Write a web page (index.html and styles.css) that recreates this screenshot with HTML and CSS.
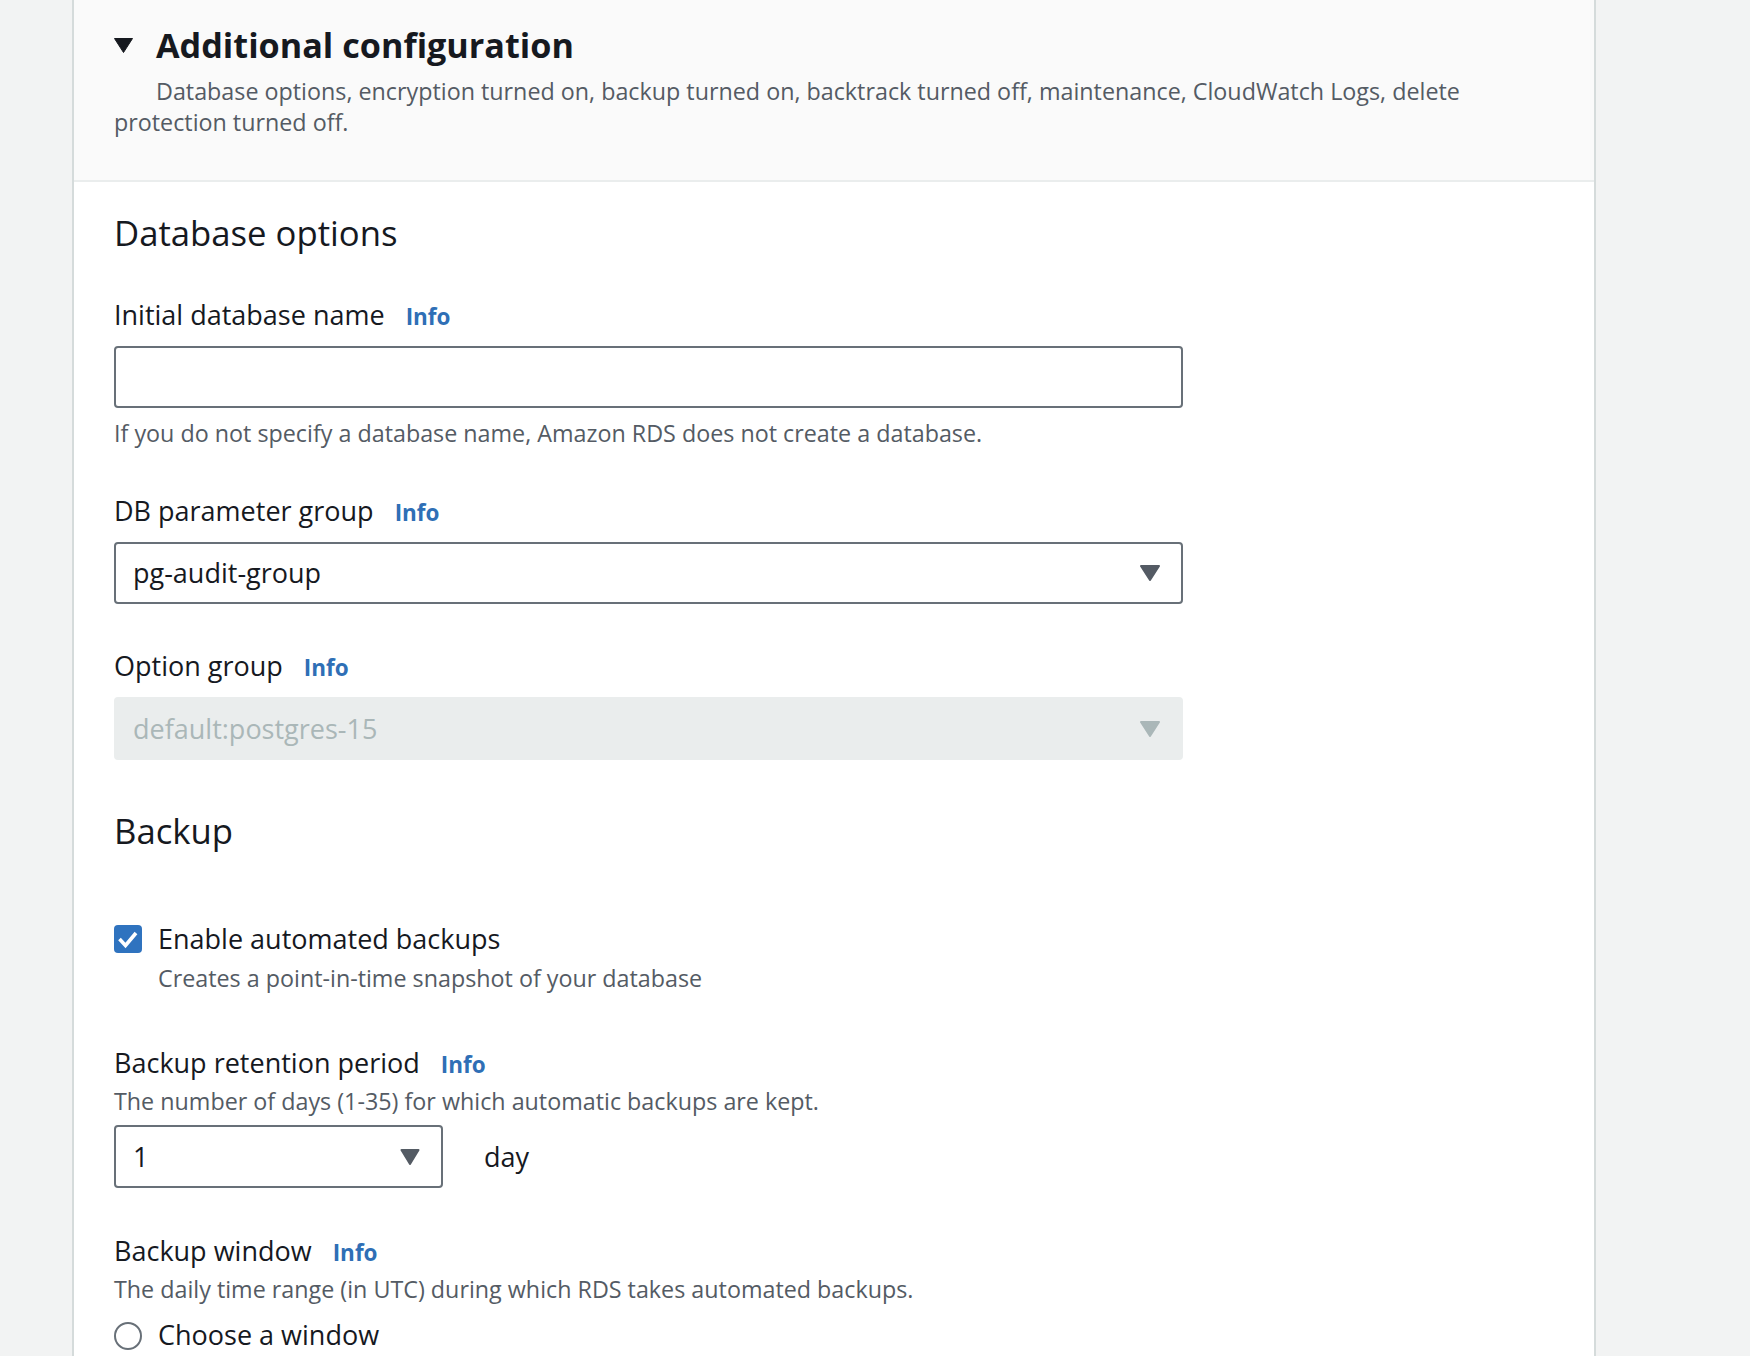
FILE: index.html
```html
<!DOCTYPE html>
<html lang="en">
<head>
<meta charset="utf-8">
<title>Additional configuration</title>
<link rel="stylesheet" href="styles.css">
</head>
<body>
<div class="page">
  <div class="panel">
    <div class="panel-header">
      <div class="header-title-row">
        <svg class="expand-icon" width="19" height="15" viewBox="0 0 19 15" aria-hidden="true"><polygon points="0.5,0.5 18.5,0.5 9.5,14.5" fill="#16191f" stroke="#16191f" stroke-width="1" stroke-linejoin="round"/></svg>
        <h1 class="header-title">Additional configuration</h1>
      </div>
      <p class="header-desc">Database options, encryption turned on, backup turned on, backtrack turned off, maintenance, CloudWatch Logs, delete protection turned off.</p>
    </div>

    <div class="panel-body">
      <h2 class="section-title">Database options</h2>

      <div class="field">
        <div class="field-label"><span>Initial database name</span><a class="info-link">Info</a></div>
        <div class="control text-input"></div>
        <div class="field-help">If you do not specify a database name, Amazon RDS does not create a database.</div>
      </div>

      <div class="field">
        <div class="field-label"><span>DB parameter group</span><a class="info-link">Info</a></div>
        <div class="control select">
          <span class="select-value">pg-audit-group</span>
          <svg class="select-arrow" width="20" height="16" viewBox="0 0 20 16" aria-hidden="true"><polygon points="1,1 19,1 10,15" fill="#545b64" stroke="#545b64" stroke-width="2" stroke-linejoin="round"/></svg>
        </div>
      </div>

      <div class="field">
        <div class="field-label"><span>Option group</span><a class="info-link">Info</a></div>
        <div class="control select select-disabled">
          <span class="select-value">default:postgres-15</span>
          <svg class="select-arrow" width="20" height="16" viewBox="0 0 20 16" aria-hidden="true"><polygon points="1,1 19,1 10,15" fill="#aab7b8" stroke="#aab7b8" stroke-width="2" stroke-linejoin="round"/></svg>
        </div>
      </div>

      <h2 class="section-title section-title-next">Backup</h2>

      <div class="checkbox-field">
        <div class="check-row">
          <span class="checkbox">
            <svg width="28" height="28" viewBox="0 0 28 28" aria-hidden="true"><polyline points="5.5,14 11.5,20.5 22,8" fill="none" stroke="#ffffff" stroke-width="3.6" stroke-linejoin="miter"/></svg>
          </span>
          <span class="check-label">Enable automated backups</span>
        </div>
        <div class="check-desc">Creates a point-in-time snapshot of your database</div>
      </div>

      <div class="field field-retention">
        <div class="field-label"><span>Backup retention period</span><a class="info-link">Info</a></div>
        <div class="field-desc">The number of days (1-35) for which automatic backups are kept.</div>
        <div class="control retention-row">
          <div class="select select-small">
            <span class="select-value">1</span>
            <svg class="select-arrow" width="20" height="16" viewBox="0 0 20 16" aria-hidden="true"><polygon points="1.5,1 18.5,1 10,15" fill="#545b64" stroke="#545b64" stroke-width="2" stroke-linejoin="round"/></svg>
          </div>
          <span class="unit">day</span>
        </div>
      </div>

      <div class="field field-window">
        <div class="field-label"><span>Backup window</span><a class="info-link">Info</a></div>
        <div class="field-desc field-desc-tight">The daily time range (in UTC) during which RDS takes automated backups.</div>
        <div class="radio-row">
          <span class="radio"></span>
          <span class="check-label">Choose a window</span>
        </div>
      </div>
    </div>
  </div>
</div>
</body>
</html>
```

FILE: styles.css
```css
html, body {
  margin: 0;
  padding: 0;
}

body {
  background: #f2f3f3;
  font-family: "Open Sans", "Noto Sans", sans-serif;
  color: #16191f;
}

.page {
  height: 1356px;
  overflow: hidden;
}

.panel {
  margin-left: 72px;
  width: 1524px;
  box-sizing: border-box;
  min-height: 1356px;
  background: #ffffff;
  border-left: 2px solid #d5dbdb;
  border-right: 2px solid #d5dbdb;
}

.panel-header {
  background: #fafafa;
  padding: 23px 40px 42px 40px;
  border-bottom: 2px solid #eaeded;
}

.header-title-row {
  display: flex;
  align-items: center;
  gap: 23px;
}

.expand-icon {
  display: block;
  flex: none;
  margin-top: 2px;
}

.header-title {
  margin: 0;
  font-size: 34.2px;
  line-height: 43px;
  font-weight: 700;
  color: #16191f;
}

.header-desc {
  margin: 10px 0 0 0;
  font-size: 23.3px;
  line-height: 31px;
  color: #545b64;
  text-indent: 42px;
}

.panel-body {
  padding: 30px 40px 0 40px;
}

.section-title {
  margin: 0;
  font-size: 34.7px;
  line-height: 42px;
  font-weight: 400;
  color: #16191f;
}

.section-title-next {
  margin-top: 50px;
}

.field {
  margin-top: 41px;
}

.section-title + .field {
  margin-top: 40px;
}

.field-retention {
  margin-top: 48px;
}

.field-window {
  margin-top: 42px;
}

.field-label {
  display: flex;
  align-items: baseline;
  gap: 21px;
  font-size: 27px;
  line-height: 42px;
  color: #16191f;
}

.info-link {
  font-size: 22.5px;
  line-height: 30px;
  font-weight: 700;
  color: #2f6fb6;
}

.field-desc {
  margin-top: 2px;
  font-size: 23.3px;
  line-height: 31px;
  color: #545b64;
}

.field-desc-tight {
  margin-top: 2px;
}

.control {
  margin-top: 10px;
}

.field-desc + .control {
  margin-top: 8px;
}

.text-input {
  width: 1069px;
  height: 62px;
  box-sizing: border-box;
  border: 2px solid #687078;
  border-radius: 4px;
  background: #ffffff;
}

.field-help {
  margin-top: 10px;
  font-size: 23.3px;
  line-height: 31px;
  color: #545b64;
}

.select {
  width: 1069px;
  height: 62px;
  box-sizing: border-box;
  border: 2px solid #687078;
  border-radius: 4px;
  background: #ffffff;
  display: flex;
  align-items: center;
  justify-content: space-between;
  padding: 0 21px 0 17px;
}

.select-value {
  font-size: 27px;
  line-height: 36px;
  color: #16191f;
}

.select-arrow {
  display: block;
  flex: none;
}

.select-disabled {
  height: 63px;
  background: #eaeded;
  border-color: #eaeded;
}

.select-disabled .select-value {
  color: #aab7b8;
}

.retention-row {
  display: flex;
  align-items: center;
}

.select-small {
  width: 329px;
  height: 63px;
}

.unit {
  margin-left: 41px;
  font-size: 27px;
  line-height: 36px;
  color: #16191f;
}

.checkbox-field {
  margin-top: 66px;
}

.check-row,
.radio-row {
  display: flex;
  align-items: flex-start;
  gap: 16px;
}

.radio-row {
  margin-top: 9px;
}

.checkbox {
  flex: none;
  width: 28px;
  height: 28px;
  margin-top: 7px;
  border-radius: 4px;
  background: #2f73bf;
  display: block;
}

.checkbox svg {
  display: block;
}

.radio {
  flex: none;
  width: 28px;
  height: 28px;
  margin-top: 8px;
  box-sizing: border-box;
  border: 2px solid #687078;
  border-radius: 50%;
  background: #ffffff;
}

.check-label {
  font-size: 27px;
  line-height: 42px;
  color: #16191f;
}

.check-desc {
  margin-top: 3px;
  padding-left: 44px;
  font-size: 23.3px;
  line-height: 31px;
  color: #545b64;
}
```
